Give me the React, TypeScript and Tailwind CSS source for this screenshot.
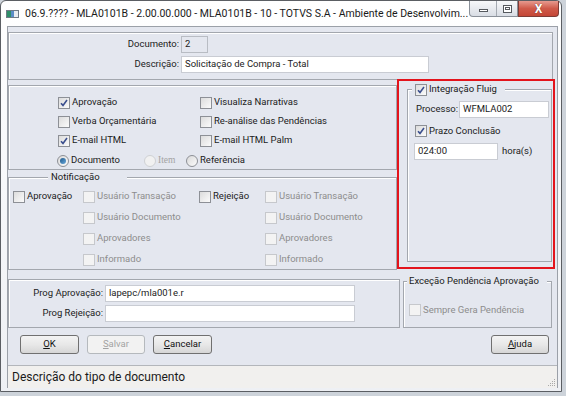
import type { ReactNode } from "react";

const font = "font-['Roboto',sans-serif]";

function Box({ checked, disabled }: { checked?: boolean; disabled?: boolean }) {
  return (
    <span
      className={
        "inline-flex h-[12px] w-[12px] shrink-0 items-center justify-center border " +
        (disabled
          ? "border-[#c6c8cc] bg-[#f3f3f3]"
          : "border-[#8d9096] bg-gradient-to-br from-[#dcdcdc] to-[#fbfbfb]")
      }
    >
      {checked && (
        <svg width="10" height="10" viewBox="0 0 10 10">
          <path d="M2 5.2 L4 7.4 L8 2" fill="none" stroke="#3b4f8e" strokeWidth="1.6" />
        </svg>
      )}
    </span>
  );
}

function Check({
  label,
  checked,
  disabled,
}: {
  label: string;
  checked?: boolean;
  disabled?: boolean;
}) {
  return (
    <span className="flex items-center">
      <Box checked={checked} disabled={disabled} />
      <span className={"ml-[2px] whitespace-nowrap " + (disabled ? "text-[#8d8d8d]" : "text-[#1b1b1b]")}>
        {label}
      </span>
    </span>
  );
}

function Radio({ label, on, disabled }: { label: string; on?: boolean; disabled?: boolean }) {
  return (
    <span className="flex items-center">
      <span
        className={
          "flex h-[12px] w-[12px] items-center justify-center rounded-full border " +
          (disabled ? "border-[#cfd1d4] bg-[#f1f1f1]" : "border-[#8d9096] bg-gradient-to-br from-[#dadada] to-[#fbfbfb]")
        }
      >
        {on && <span className="h-[6px] w-[6px] rounded-full bg-gradient-to-br from-[#1f5a8c] to-[#69a9dc]" />}
      </span>
      <span className={"ml-[2px] " + (disabled ? "font-['Liberation_Serif',serif] text-[#a3a3a3]" : "text-[#1b1b1b]")}>
        {label}
      </span>
    </span>
  );
}

function Field({ w, value, gray }: { w: string; value?: string; gray?: boolean }) {
  return (
    <div
      className={
        "flex h-[17px] items-center border px-[3px] whitespace-nowrap " +
        w +
        (gray ? " border-[#b8bcc3] bg-[#e4e7ef]" : " border-[#c9ccd3] bg-white")
      }
    >
      {value}
    </div>
  );
}

function Legend({ children, cls }: { children: ReactNode; cls: string }) {
  return (
    <div className={"-mt-[7px] flex h-[13px] w-fit items-center whitespace-nowrap bg-[#e4e7ef] " + cls}>
      {children}
    </div>
  );
}

function Btn({ k, rest, w, disabled }: { k: string; rest: string; w: string; disabled?: boolean }) {
  return (
    <div
      className={
        "flex h-[19px] items-center justify-center rounded-[3px] border " +
        w +
        (disabled
          ? " border-[#b5b9bd] bg-[#f2f2f2] text-[#a3a3a3]"
          : " border-[#707070] bg-gradient-to-b from-[#f3f3f3] via-[#e8e8e8] to-[#d6d6d6] text-[#111]")
      }
    >
      <span className="underline underline-offset-[1px]">{k}</span>
      {rest}
    </div>
  );
}

const panel = "border border-[#a3a7ae] shadow-[inset_1px_1px_0_#ffffff]";

export default function App() {
  return (
    <div className={"relative h-[396px] w-[566px] overflow-hidden bg-[#cdd3da] " + font}>
      <div className="flex h-[392px] w-[562px] flex-col rounded-t-[6px] border border-[#5b5e63] bg-gradient-to-b from-[#ffffff] to-[#eef0f4]">
        {/* title bar */}
        <div className="relative flex h-[25px] items-center">
          <svg className="ml-[5px]" width="13" height="8" viewBox="0 0 13 8">
            <rect x="0.5" y="0.5" width="12" height="7" fill="#e8ecf1" stroke="#6f7a86" />
            <rect x="1" y="1" width="4" height="6" fill="#2f8f6a" />
            <rect x="5" y="1" width="3" height="6" fill="#5a8cc7" />
          </svg>
          <span className="ml-[6px] whitespace-nowrap text-[10.5px] text-[#1a1a1a]">
            06.9.???? - MLA0101B - 2.00.00.000 - MLA0101B - 10 - TOTVS S.A - Ambiente de Desenvolvim...
          </span>
          <div className="absolute top-0 right-[2px] flex">
            <div className="flex h-[16px] overflow-hidden rounded-bl-[4px] border border-t-0 border-[#8a9099] bg-gradient-to-b from-[#f7f8fa] to-[#d9dde4]">
              <div className="flex w-[27px] items-end justify-center border-r border-[#a4a9b1] pb-[4px]">
                <span className="h-[3px] w-[9px] border border-[#56595e] bg-white" />
              </div>
              <div className="flex w-[20px] items-center justify-center">
                <span className="flex h-[8px] w-[9px] items-center justify-center border border-[#56595e] bg-white">
                  <span className="h-[3px] w-[5px] border border-[#56595e]" />
                </span>
              </div>
            </div>
            <div className="flex h-[16px] w-[41px] items-center justify-center rounded-br-[4px] border border-t-0 border-[#7e3b35] bg-gradient-to-b from-[#e69a8f] via-[#cf5a4a] to-[#c44636]">
              <span className="text-[12px] leading-none font-bold text-white [text-shadow:0_0_1px_#4a1a14]">X</span>
            </div>
          </div>
        </div>

        {/* client */}
        <div className="ml-[6px] flex h-[362px] w-[551px] flex-col border border-b-0 border-[#9ba0a8] bg-[#e4e7ef] text-[9.5px] text-[#1b1b1b]">
          <div className={"mt-[5px] h-[48px] w-[545px] " + panel}>
            <div className="grid grid-cols-[170px_auto] gap-x-[2px] gap-y-[3px] pt-[3px]">
              <span className="flex h-[17px] items-center justify-end">Documento:</span>
              <Field w="w-[27px]" value="2" gray />
              <span className="flex h-[17px] items-center justify-end">Descrição:</span>
              <Field w="w-[248px]" value="Solicitação de Compra - Total" />
            </div>
          </div>

          <div className="mt-[5px] flex h-[187px]">
            <div className="flex w-[389px] flex-col">
              <div className={"h-[85px] " + panel}>
                <div className="grid grid-cols-[142px_auto] pt-[7px] pl-[49px]">
                  <div className="flex h-[19px] items-center"><Check label="Aprovação" checked /></div>
                  <div className="flex h-[19px] items-center"><Check label="Visualiza Narrativas" /></div>
                  <div className="flex h-[19px] items-center"><Check label="Verba Orçamentária" /></div>
                  <div className="flex h-[19px] items-center"><Check label="Re-análise das Pendências" /></div>
                  <div className="flex h-[19px] items-center"><Check label="E-mail HTML" checked /></div>
                  <div className="flex h-[19px] items-center"><Check label="E-mail HTML Palm" /></div>
                </div>
                <div className="mt-[2px] flex h-[17px] items-center pl-[48px]">
                  <div className="w-[87px]"><Radio label="Documento" on /></div>
                  <div className="w-[42px]"><Radio label="Item" disabled /></div>
                  <Radio label="Referência" />
                </div>
              </div>
              <div className={"mt-[7px] h-[93px] " + panel}>
                <Legend cls="ml-[39px] pl-[3px] pr-[27px]">Notificação</Legend>
                <div className="grid grid-cols-[70px_116px_66px_1fr] pt-[2px] pl-[4px]">
                  <div className="flex h-[21px] items-center"><Check label="Aprovação" /></div>
                  <div className="flex h-[21px] items-center"><Check label="Usuário Transação" disabled /></div>
                  <div className="flex h-[21px] items-center"><Check label="Rejeição" /></div>
                  <div className="flex h-[21px] items-center"><Check label="Usuário Transação" disabled /></div>
                  <div />
                  <div className="flex h-[21px] items-center"><Check label="Usuário Documento" disabled /></div>
                  <div />
                  <div className="flex h-[21px] items-center"><Check label="Usuário Documento" disabled /></div>
                  <div />
                  <div className="flex h-[21px] items-center"><Check label="Aprovadores" disabled /></div>
                  <div />
                  <div className="flex h-[21px] items-center"><Check label="Aprovadores" disabled /></div>
                  <div />
                  <div className="flex h-[21px] items-center"><Check label="Informado" disabled /></div>
                  <div />
                  <div className="flex h-[21px] items-center"><Check label="Informado" disabled /></div>
                </div>
              </div>
            </div>

            <div className="ml-[6px] w-[154px]">
              <div className={"mt-[4px] ml-[4px] h-[173px] w-[145px] " + panel}>
                <Legend cls="ml-[4px] pl-[3px] pr-[8px]">
                  <Check label="Integração Fluig" checked />
                </Legend>
                <div className="mt-[5px] flex items-center pl-[8px]">
                  <span className="w-[43px] whitespace-nowrap">Processo:</span>
                  <Field w="w-[90px]" value="WFMLA002" />
                </div>
                <div className="mt-[6px] flex h-[14px] items-center pl-[7px]">
                  <Check label="Prazo Conclusão" checked />
                </div>
                <div className="mt-[5px] flex items-center pl-[6px]">
                  <Field w="w-[84px]" value="024:00" />
                  <span className="ml-[4px]">hora(s)</span>
                </div>
              </div>
            </div>
          </div>

          <div className="mt-[7px] flex h-[49px]">
            <div className={"w-[392px] " + panel}>
              <div className="grid grid-cols-[94px_250px] gap-x-[2px] gap-y-[3px] pt-[5px]">
                <span className="flex h-[17px] items-center justify-end">Prog Aprovação:</span>
                <Field w="w-[250px]" value="lapepc/mla001e.r" />
                <span className="flex h-[17px] items-center justify-end">Prog Rejeição:</span>
                <Field w="w-[250px]" />
              </div>
            </div>
            <div className={"mt-[2px] ml-[3px] h-[47px] w-[149px] " + panel}>
              <Legend cls="ml-[3px] pl-[2px] pr-[8px]">Exceção Pendência Aprovação</Legend>
              <div className="mt-[15px] flex h-[14px] items-center pl-[5px]">
                <Check label="Sempre Gera Pendência" disabled />
              </div>
            </div>
          </div>

          <div className="mt-[7px] flex h-[19px] pl-[12px]">
            <Btn k="O" rest="K" w="w-[59px]" />
            <div className="ml-[8px]"><Btn k="S" rest="alvar" w="w-[58px]" disabled /></div>
            <div className="ml-[8px]"><Btn k="C" rest="ancelar" w="w-[59px]" /></div>
            <div className="mr-[8px] ml-auto"><Btn k="A" rest="juda" w="w-[58px]" /></div>
          </div>

          <div className="relative mt-[11px] flex h-[23px] items-center border-t border-[#b3b6bb] bg-[#f1f0ee] pl-[4px] text-[12px] text-[#1a1a1a]">
            Descrição do tipo de documento
            <svg className="absolute right-[1px] bottom-[1px]" width="8" height="8" viewBox="0 0 8 8">
              <g fill="#a9a9a9">
                <rect x="6" y="0" width="1" height="1" />
                <rect x="4" y="2" width="1" height="1" />
                <rect x="6" y="2" width="1" height="1" />
                <rect x="2" y="4" width="1" height="1" />
                <rect x="4" y="4" width="1" height="1" />
                <rect x="6" y="4" width="1" height="1" />
                <rect x="0" y="6" width="1" height="1" />
                <rect x="2" y="6" width="1" height="1" />
                <rect x="4" y="6" width="1" height="1" />
                <rect x="6" y="6" width="1" height="1" />
              </g>
            </svg>
          </div>
        </div>
      </div>

      {/* annotation highlight */}
      <div className="absolute top-[79px] left-[397px] h-[190px] w-[158px] border-2 border-[#e3141c]" />
    </div>
  );
}
